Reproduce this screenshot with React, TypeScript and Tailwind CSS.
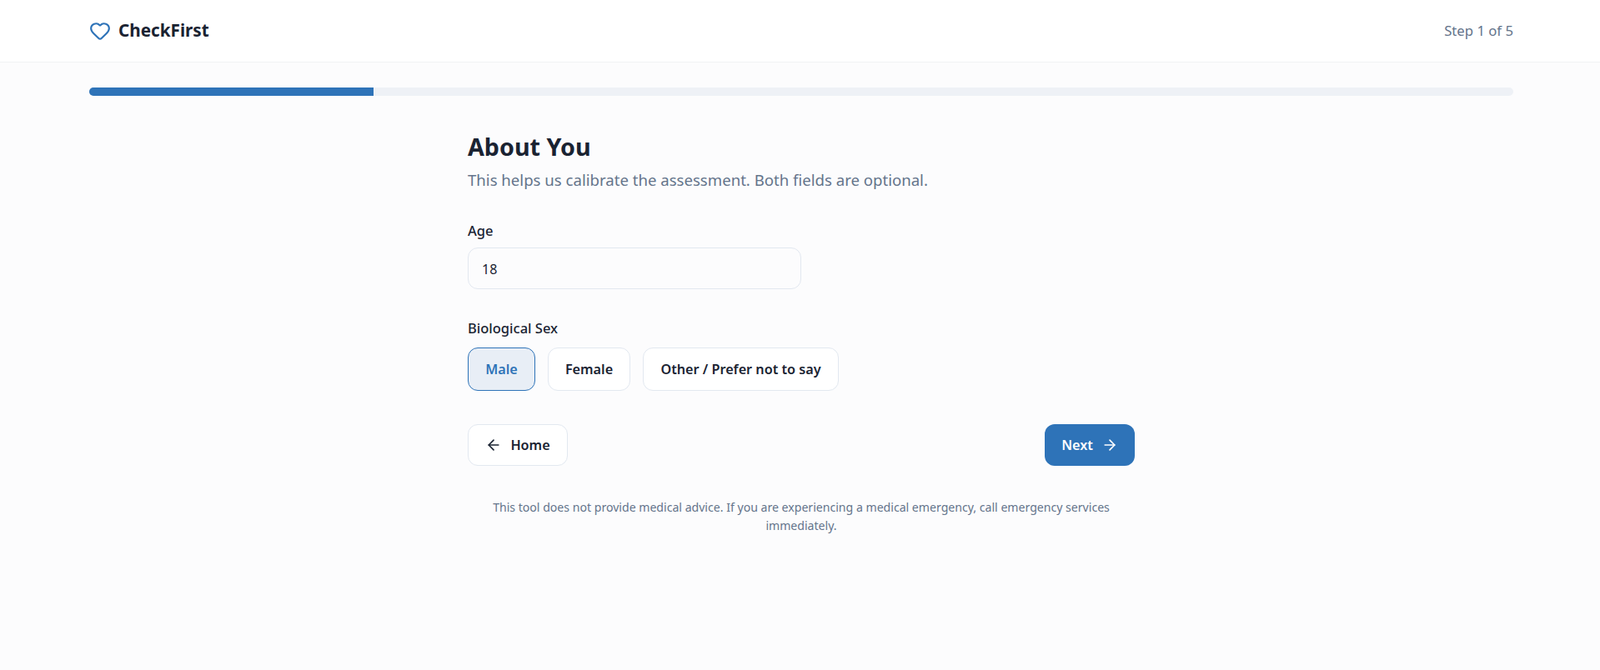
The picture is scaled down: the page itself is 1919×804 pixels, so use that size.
import { ArrowLeft, ArrowRight, Heart } from "lucide-react";

const font = "font-['Noto_Sans','Open_Sans',sans-serif]";

const App = () => {
  return (
    <div className={`min-h-[804px] bg-[#fcfcfd] text-[#1a2332] ${font}`}>
      <header className="h-[75px] bg-white border-b border-[#f1f2f4] pl-[107px] pr-[104px] flex items-center justify-between">
        <div className="flex items-center gap-[9px]">
          <Heart className="w-[26px] h-[26px] text-[#2e73b8]" strokeWidth={2} />
          <span className="text-[20.7px] font-bold">CheckFirst</span>
        </div>
        <span className="text-[16.7px] text-[#64748b]">Step 1 of 5</span>
      </header>

      <main className="pl-[107px] pr-[104px] pt-[30px]">
        <div className="h-[10px] rounded-full bg-[#eef1f6] overflow-hidden">
          <div className="h-full w-[341px] bg-[#2e73b8]" />
        </div>

        <div className="w-[800px] mx-auto pt-[40px]">
          <h1 className="text-[28.7px] leading-[42px] font-bold">About You</h1>
          <p className="text-[18.6px] leading-[27px] text-[#64748b] mt-[5px]">
            This helps us calibrate the assessment. Both fields are optional.
          </p>

          <label className="block text-[16.5px] leading-[22px] font-medium mt-[37px]">Age</label>
          <input
            readOnly
            value="18"
            className="block mt-[9px] w-[400px] h-[50px] px-4 pt-[2px] rounded-[12px] border border-[#e2e8f0] bg-[#fcfcfd] text-[16px] outline-none"
          />

          <label className="block text-[16.5px] leading-[22px] font-medium mt-9">Biological Sex</label>
          <div className="flex gap-[15px] mt-3">
            <button className="h-[52px] w-[81px] rounded-[12px] border border-[#2e73b8] bg-[#e8eef6] text-[#2e73b8] text-[16.2px] font-semibold">
              Male
            </button>
            <button className="h-[52px] w-[99px] rounded-[12px] border border-[#e2e8f0] bg-white text-[16.2px] font-semibold">
              Female
            </button>
            <button className="h-[52px] w-[235px] rounded-[12px] border border-[#e2e8f0] bg-white text-[16.2px] font-semibold">
              Other / Prefer not to say
            </button>
          </div>

          <div className="flex justify-between mt-10">
            <button className="h-[50px] w-[120px] rounded-[12px] border border-[#e2e8f0] bg-white flex items-center justify-center gap-2.5 text-[16.2px] font-semibold">
              <ArrowLeft className="w-5 h-5" />
              Home
            </button>
            <button className="h-[50px] w-[108px] rounded-[12px] bg-[#2e73b8] text-white flex items-center justify-center gap-2.5 text-[16.2px] font-semibold">
              Next
              <ArrowRight className="w-5 h-5" />
            </button>
          </div>

          <p className="text-center text-[14.1px] leading-[22px] text-[#64748b] mt-[39px]">
            This tool does not provide medical advice. If you are experiencing a medical emergency, call emergency services immediately.
          </p>
        </div>
      </main>
    </div>
  );
};

export default App;
